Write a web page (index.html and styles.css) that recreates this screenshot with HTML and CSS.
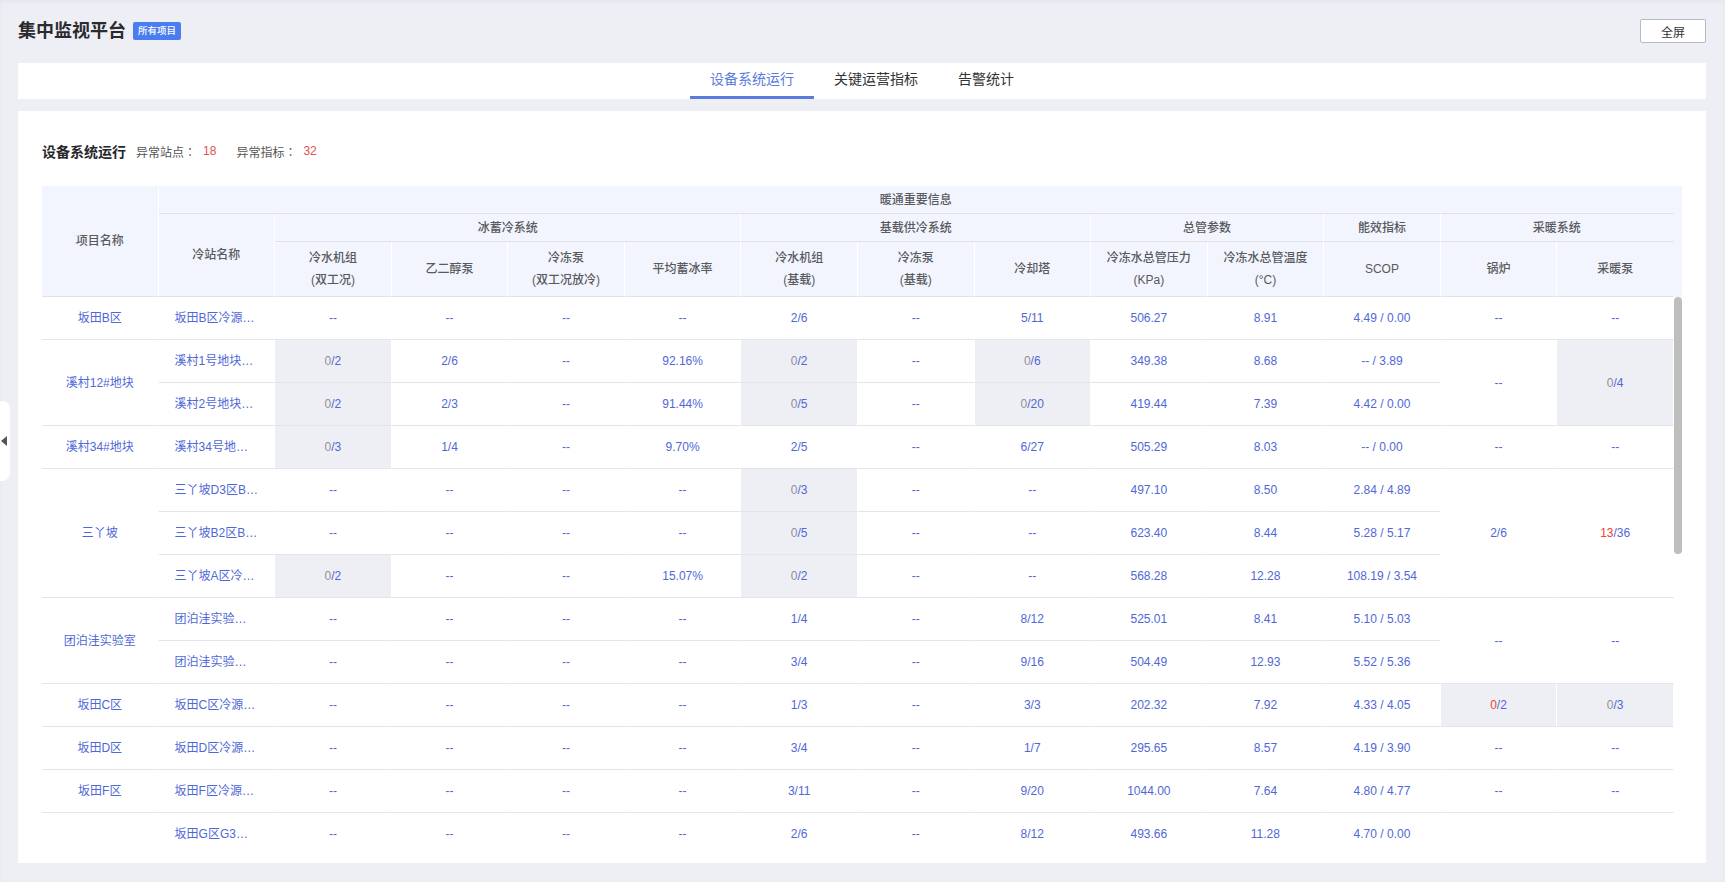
FILE: index.html
```html
<!DOCTYPE html>
<html lang="zh-CN">
<head>
<meta charset="utf-8">
<title>集中监视平台</title>
<link rel="stylesheet" href="styles.css">
</head>
<body>
<div class="side-toggle"><span class="side-arrow"></span></div>
<div class="page">
  <header class="top">
    <div class="top-left">
      <h1 class="title">集中监视平台</h1>
      <span class="badge">所有项目</span>
    </div>
    <button class="fs-btn" type="button">全屏</button>
  </header>
  <nav class="tabs">
    <a class="tab active">设备系统运行</a>
    <a class="tab">关键运营指标</a>
    <a class="tab">告警统计</a>
  </nav>
  <section class="panel">
    <div class="summary">
      <h2 class="summary-title">设备系统运行</h2>
      <span class="summary-label">异常站点<span class="colon" lang="zh-TW">：</span></span><span class="summary-value">18</span>
      <span class="summary-label">异常指标<span class="colon" lang="zh-TW">：</span></span><span class="summary-value">32</span>
    </div>
    <div class="head-wrap">
      <table class="grid head">
        <colgroup><col><col><col><col><col><col><col><col><col><col><col><col><col><col></colgroup>
        <thead>
          <tr class="h1"><th rowspan="3">项目名称</th><th colspan="13">暖通重要信息</th></tr>
          <tr class="h2"><th rowspan="2">冷站名称</th><th colspan="4">冰蓄冷系统</th><th colspan="3">基载供冷系统</th><th colspan="2">总管参数</th><th>能效指标</th><th colspan="2">采暖系统</th></tr>
          <tr class="h3">
            <th>冷水机组<br>(双工况)</th><th>乙二醇泵</th><th>冷冻泵<br>(双工况放冷)</th><th>平均蓄冰率</th>
            <th>冷水机组<br>(基载)</th><th>冷冻泵<br>(基载)</th><th>冷却塔</th>
            <th>冷冻水总管压力<br>(KPa)</th><th>冷冻水总管温度<br>(°C)</th><th>SCOP</th><th>锅炉</th><th>采暖泵</th>
          </tr>
        </thead>
      </table>
    </div>
    <div class="body-wrap">
      <div class="body-scroll">
        <table class="grid body">
          <colgroup><col><col><col><col><col><col><col><col><col><col><col><col><col><col></colgroup>
          <tbody>
            <tr><td>坂田B区</td><td class="st">坂田B区冷源…</td><td>--</td><td>--</td><td>--</td><td>--</td><td>2/6</td><td>--</td><td>5/11</td><td>506.27</td><td>8.91</td><td>4.49 / 0.00</td><td>--</td><td>--</td></tr>
            <tr><td rowspan="2">溪村12#地块</td><td class="st">溪村1号地块…</td><td class="off"><span class="zero">0</span>/2</td><td>2/6</td><td>--</td><td>92.16%</td><td class="off"><span class="zero">0</span>/2</td><td>--</td><td class="off"><span class="zero">0</span>/6</td><td>349.38</td><td>8.68</td><td>-- / 3.89</td><td rowspan="2">--</td><td rowspan="2" class="off"><span class="zero">0</span>/4</td></tr>
            <tr><td class="st">溪村2号地块…</td><td class="off"><span class="zero">0</span>/2</td><td>2/3</td><td>--</td><td>91.44%</td><td class="off"><span class="zero">0</span>/5</td><td>--</td><td class="off"><span class="zero">0</span>/20</td><td>419.44</td><td>7.39</td><td>4.42 / 0.00</td></tr>
            <tr><td>溪村34#地块</td><td class="st">溪村34号地…</td><td class="off"><span class="zero">0</span>/3</td><td>1/4</td><td>--</td><td>9.70%</td><td>2/5</td><td>--</td><td>6/27</td><td>505.29</td><td>8.03</td><td>-- / 0.00</td><td>--</td><td>--</td></tr>
            <tr><td rowspan="3">三丫坡</td><td class="st">三丫坡D3区B…</td><td>--</td><td>--</td><td>--</td><td>--</td><td class="off"><span class="zero">0</span>/3</td><td>--</td><td>--</td><td>497.10</td><td>8.50</td><td>2.84 / 4.89</td><td rowspan="3">2/6</td><td rowspan="3"><span class="alarm">13</span>/36</td></tr>
            <tr><td class="st">三丫坡B2区B…</td><td>--</td><td>--</td><td>--</td><td>--</td><td class="off"><span class="zero">0</span>/5</td><td>--</td><td>--</td><td>623.40</td><td>8.44</td><td>5.28 / 5.17</td></tr>
            <tr><td class="st">三丫坡A区冷…</td><td class="off"><span class="zero">0</span>/2</td><td>--</td><td>--</td><td>15.07%</td><td class="off"><span class="zero">0</span>/2</td><td>--</td><td>--</td><td>568.28</td><td>12.28</td><td>108.19 / 3.54</td></tr>
            <tr><td rowspan="2">团泊洼实验室</td><td class="st">团泊洼实验…</td><td>--</td><td>--</td><td>--</td><td>--</td><td>1/4</td><td>--</td><td>8/12</td><td>525.01</td><td>8.41</td><td>5.10 / 5.03</td><td rowspan="2">--</td><td rowspan="2">--</td></tr>
            <tr><td class="st">团泊洼实验…</td><td>--</td><td>--</td><td>--</td><td>--</td><td>3/4</td><td>--</td><td>9/16</td><td>504.49</td><td>12.93</td><td>5.52 / 5.36</td></tr>
            <tr><td>坂田C区</td><td class="st">坂田C区冷源…</td><td>--</td><td>--</td><td>--</td><td>--</td><td>1/3</td><td>--</td><td>3/3</td><td>202.32</td><td>7.92</td><td>4.33 / 4.05</td><td class="off"><span class="alarm">0</span>/2</td><td class="off"><span class="zero">0</span>/3</td></tr>
            <tr><td>坂田D区</td><td class="st">坂田D区冷源…</td><td>--</td><td>--</td><td>--</td><td>--</td><td>3/4</td><td>--</td><td>1/7</td><td>295.65</td><td>8.57</td><td>4.19 / 3.90</td><td>--</td><td>--</td></tr>
            <tr><td>坂田F区</td><td class="st">坂田F区冷源…</td><td>--</td><td>--</td><td>--</td><td>--</td><td>3/11</td><td>--</td><td>9/20</td><td>1044.00</td><td>7.64</td><td>4.80 / 4.77</td><td>--</td><td>--</td></tr>
            <tr class="last"><td></td><td class="st">坂田G区G3…</td><td>--</td><td>--</td><td>--</td><td>--</td><td>2/6</td><td>--</td><td>8/12</td><td>493.66</td><td>11.28</td><td>4.70 / 0.00</td><td></td><td></td></tr>
          </tbody>
        </table>
      </div>
      <div class="scroll-track"><div class="scroll-thumb"></div></div>
    </div>
  </section>
</div>
</body>
</html>
```
FILE: styles.css
```css
* { box-sizing: border-box; }
html, body { margin: 0; height: 100%; }
body {
  background: #eeeff4;
  font-family: "Liberation Sans", "Noto Sans CJK SC", sans-serif;
  font-size: 12px;
  color: #333;
  overflow: hidden;
  box-shadow: inset 0 2px 4px rgba(120, 130, 160, 0.08);
}
.side-toggle {
  position: absolute;
  left: 0;
  top: 401px;
  width: 10px;
  height: 80px;
  background: #fff;
  border-radius: 0 8px 8px 0;
  display: flex;
  align-items: center;
  justify-content: flex-start;
  padding-left: 1px;
}
.side-arrow {
  width: 0;
  height: 0;
  border-style: solid;
  border-width: 5px 6px 5px 0;
  border-color: transparent #555 transparent transparent;
}
.page { padding: 0 19px 0 18px; }
.top {
  height: 63px;
  padding: 19px 0 20px;
  display: flex;
  align-items: center;
  justify-content: space-between;
}
.top-left { display: flex; align-items: center; gap: 7px; }
.title { margin: 0; font-size: 18px; line-height: 24px; font-weight: 700; color: #2b2b2f; }
.badge {
  width: 48px;
  height: 18px;
  line-height: 18px;
  text-align: center;
  background: #4a7df0;
  color: #fff;
  font-size: 9.5px;
  font-weight: 500;
  border-radius: 2px;
}
.fs-btn {
  width: 66px;
  height: 24px;
  padding: 0;
  background: #fff;
  border: 1px solid #b5b9c9;
  border-radius: 2px;
  font: inherit;
  color: #333;
}
.tabs {
  height: 36px;
  margin-bottom: 12px;
  background: #fff;
  display: flex;
  justify-content: center;
}
.tab {
  padding: 0 20px;
  height: 36px;
  line-height: 33px;
  font-size: 14px;
  color: #333;
}
.tab.active { color: #5b7be0; border-bottom: 3px solid #5b7be0; }
.panel {
  background: #fff;
  padding: 30px 24px 9px;
}
.summary {
  height: 20px;
  margin-bottom: 25px;
  display: flex;
  align-items: center;
}
.summary-title { margin: 0 10px 0 0; font-size: 14px; font-weight: 700; color: #26262a; }
.summary-label { color: #555; margin-right: 7px; }
.colon { font-family: "Noto Sans CJK TC", sans-serif; }
.summary-value { color: #e2504f; margin-right: 20px; }
.head-wrap { background: #f2f5fd; width: 1640px; }
.grid {
  border-collapse: separate;
  border-spacing: 0;
  table-layout: fixed;
  width: 1632px;
}
.grid th {
  background: #f2f5fd;
  border-right: 1px solid #fff;
  border-bottom: 1px solid #e0e2e8;
  font-weight: 500;
  color: #585a60;
  padding: 0;
  text-align: center;
  line-height: 22px;
}
.grid th:last-child { border-right-color: #f2f5fd; }
.h1, .h2 { height: 28px; }
.h1 th:first-child { border-right-color: #fff; }
.h3 { height: 55px; }
.body-wrap { display: flex; width: 1640px; height: 557px; }
.body-scroll { width: 1632px; height: 557px; overflow: hidden; }
.scroll-track { width: 8px; height: 557px; }
.scroll-thumb { width: 8px; height: 257px; background: #bebebe; border-radius: 4px; }
.grid td {
  height: 43px;
  line-height: 20px;
  padding: 0 16px;
  border-right: 1px solid #fff;
  border-bottom: 1px solid #e3e4e8;
  text-align: center;
  color: #5068d6;
  white-space: nowrap;
}
.grid td.st { text-align: left; padding-right: 0; }
.grid td.off { background: #eeeff4; }
.zero { color: #8f8f96; }
.alarm { color: #f0452e; }
```
